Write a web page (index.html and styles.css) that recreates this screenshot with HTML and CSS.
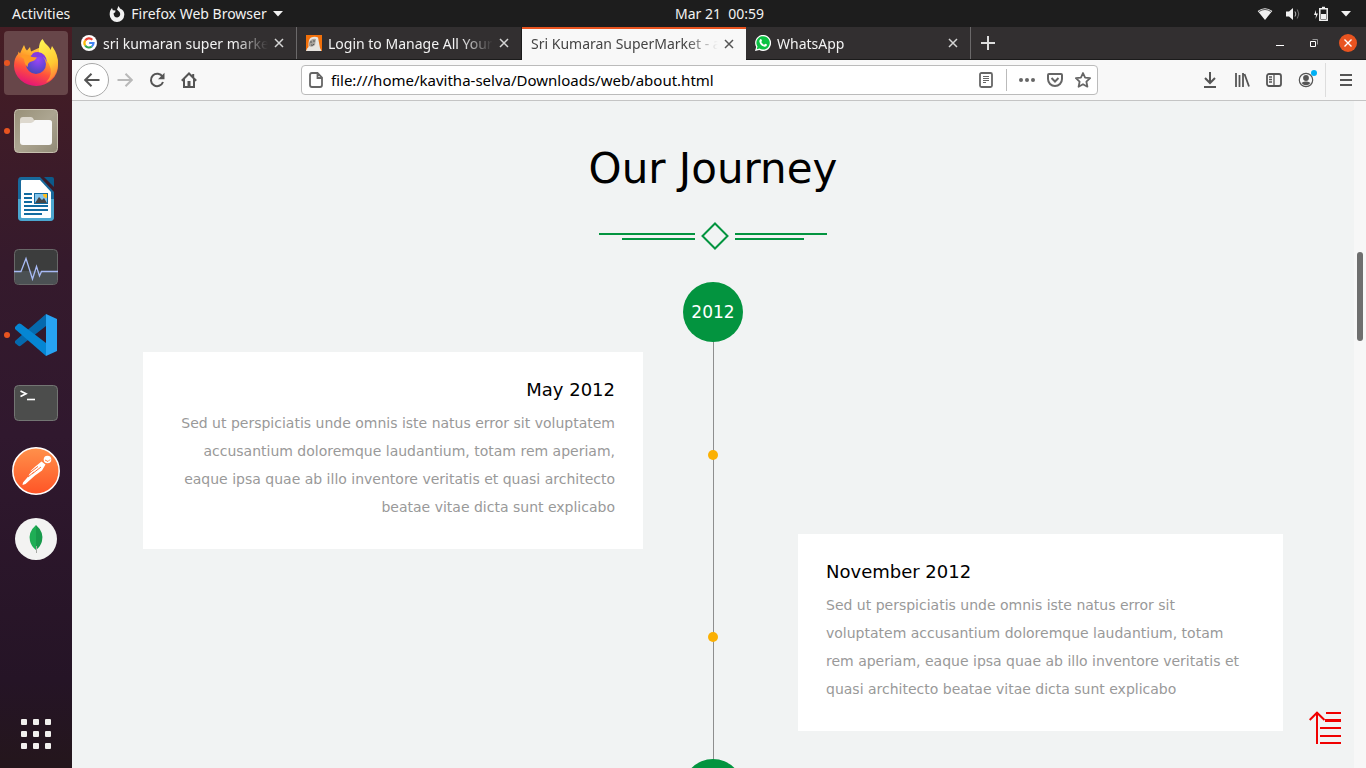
FILE: index.html
```html
<!DOCTYPE html>
<html lang="en">
<head>
<meta charset="utf-8">
<title>Sri Kumaran SuperMarket - about</title>
<meta name="viewport" content="width=device-width, initial-scale=1">
<link rel="stylesheet" href="styles.css">
</head>
<body>
<div class="desktop">
  <header class="panel">
    <div class="panel-left">
      <button class="panel-btn" type="button">Activities</button>
      <button class="panel-btn app-menu" type="button">
        <svg width="16" height="16" viewBox="0 0 16 16" aria-hidden="true"><path d="M8 3.5 9.5 0 11 2.500C14 3.500 15.500 6 15.300 8.800A7.300 7.300 0 0 1 .7 8.500C.6 6 1.300 4 3 2L3.800 4.200 6.500 4.500 6.200 6.200 4.600 7.200C4.600 10 6 11.400 8.200 11.400A3.400 3.400 0 0 0 11.200 8C11.200 6 9.800 5.500 8 3.500Z" fill="#f2f2f2"/></svg>
        <span>Firefox Web Browser</span>
        <svg width="10" height="6" viewBox="0 0 10 6" aria-hidden="true"><path d="M0 0h10L5 5.500z" fill="#f2f2f2"/></svg>
      </button>
    </div>
    <time class="clock">Mar 21&nbsp; 00:59</time>
    <button class="panel-btn status" type="button" aria-label="System status">
      <svg width="16" height="14" viewBox="0 0 16 14" aria-hidden="true"><path d="M.7 4Q8-1.500 15.300 4L8 13z" fill="#f2f2f2"/><path d="M2 4.500Q8 .5 14 4.500" fill="none" stroke="#555"/></svg>
      <svg width="16" height="14" viewBox="0 0 16 14" aria-hidden="true"><path d="M1 4.500h3L8 1v12L4 9.500H1z" fill="#f2f2f2"/><path d="M10 4.500q1.700 2.500 0 5" fill="none" stroke="#bbb"/><path d="M12.300 2.500q3 4.500 0 9" fill="none" stroke="#777"/></svg>
      <svg width="16" height="16" viewBox="0 0 16 16" aria-hidden="true"><path d="M3 4 1 9h2l-.5 4L5 7.500H3z" fill="#f2f2f2"/><path d="M6.800 2.800h7.400v11.400H6.800zM9 1.500h3" fill="none" stroke="#f2f2f2" stroke-width="1.500"/><path d="M8 8h5v5H8z" fill="#f2f2f2"/></svg>
      <svg width="10" height="6" viewBox="0 0 10 6" aria-hidden="true"><path d="M0 0h10L5 5.500z" fill="#f2f2f2"/></svg>
    </button>
  </header>

  <div class="workspace">
    <nav class="dock" aria-label="Dock">
      <button class="dock-app running focused" type="button" aria-label="Firefox">
        <svg width="48" height="48" viewBox="0 0 48 48">
          <defs>
            <linearGradient id="ff-body" x1=".75" y1="0" x2=".35" y2="1"><stop offset="0" stop-color="#ffe14a"/><stop offset=".35" stop-color="#ffa52c"/><stop offset=".65" stop-color="#ff4f3d"/><stop offset="1" stop-color="#e3127a"/></linearGradient>
            <linearGradient id="ff-tail" x1=".4" y1="0" x2=".7" y2="1"><stop offset="0" stop-color="#fff250"/><stop offset=".6" stop-color="#ffc832"/><stop offset="1" stop-color="#ff7139"/></linearGradient>
            <radialGradient id="ff-globe" cx=".6" cy=".3" r=".8"><stop offset="0" stop-color="#9a45f5"/><stop offset=".5" stop-color="#6b45d8"/><stop offset="1" stop-color="#3d4aae"/></radialGradient>
          </defs>
          <path d="M10 10 12 6Q13.500 10.500 15 11.500L18 8 19 12.500 29 8C40 10 46 19 46 26A22 20.500 0 0 1 2 27Q2 19 6 15L6.500 12.500 8 14.500Z" fill="url(#ff-body)"/>
          <path d="M27 10Q27 3 30.500 0 33 5 36 7 38 9 38.500 11L40 7Q46.500 16 46 25 45 39 34 43.500 42 35 37 25 34 20 27 17Z" fill="url(#ff-tail)"/>
          <circle cx="24" cy="25" r="10" fill="url(#ff-globe)"/>
          <path d="M8 17Q15 14 20 18L25 18.500Q23 22 18 23 15 25 16 28 12 25 12 20Z" fill="#ff9b25"/>
          <path d="M20 18Q19 13 26 13 34 14 35 23 31 16 25 18Z" fill="#843be0"/>
        </svg>
      </button>
      <button class="dock-app running" type="button" aria-label="Files">
        <svg width="48" height="48" viewBox="0 0 48 48">
          <defs><linearGradient id="files-bg" x1="0" y1="0" x2="1" y2="1"><stop offset="0" stop-color="#989078"/><stop offset=".5" stop-color="#aca591"/><stop offset="1" stop-color="#918a76"/></linearGradient></defs>
          <rect x="2.500" y="2.500" width="43" height="43" rx="4" fill="url(#files-bg)" stroke="#c6bfae"/>
          <path d="M8 13q0-3 3-3h8q2 0 3 3h15q3 0 3 3v6H8z" fill="#ddd8ce"/>
          <path d="M8 17q0-1 2-1h9q2 0 4-3h14q3 0 3 3v19q0 3-3 3H11q-3 0-3-3z" fill="#f8f8f8"/>
        </svg>
      </button>
      <button class="dock-app" type="button" aria-label="Writer">
        <svg width="48" height="48" viewBox="0 0 48 48">
          <path d="M9 2h19l14 15v25q0 4-4 4H10q-4 0-4-4V6q0-4 3-4z" fill="#18699b"/>
          <path d="M6 24h36v18q0 4-4 4H10q-4 0-4-4z" fill="#4ba6cf"/>
          <path d="M9 6q0-1 1-1h18l11 12v25q0 1-1 1H10q-1 0-1-1z" fill="#fff"/>
          <path d="M32 2h8q2 0 2 2v8z" fill="#0c5a8a"/>
          <path d="M12 19h8M12 23h8M12 27h8M12 31h24M12 35h24M12 39h18" stroke="#126ba0" stroke-width="2"/>
          <rect x="22.500" y="18.500" width="13" height="10" fill="#82c4ec" stroke="#126ba0"/><path d="M23 28l4-6 3 3 2-2 3 5z" fill="#454545"/><path d="M31 19h4v4q-4 0-4-4z" fill="#ffbf1f"/>
        </svg>
      </button>
      <button class="dock-app" type="button" aria-label="System Monitor">
        <svg width="48" height="48" viewBox="0 0 48 48">
          <rect x="2.500" y="6.500" width="43" height="35" rx="4" fill="#3c3d3d" stroke="#686868"/><path d="M3 28h42v9q0 4-4 4H7q-4 0-4-4z" fill="#4b5053"/>
          <path d="M2 28.500h7l5-13 6.500 20.500 4-12.500 3 9.500 2-4.500H46" fill="none" stroke="#a8baf5" stroke-width="1.300"/>
        </svg>
      </button>
      <button class="dock-app running" type="button" aria-label="Visual Studio Code">
        <svg width="48" height="48" viewBox="0 0 48 48">
          <path d="M34 3v12L9 34.500Q7.500 36 6 34.500L3 32v-2z" fill="#0569ad"/>
          <path d="M3 16l3-3q1.500-1 3 0l25 19v13L3 18z" fill="#0586d3"/>
          <path d="M34 3l11 5v32l-11 5z" fill="#27a3f2"/>
        </svg>
      </button>
      <button class="dock-app" type="button" aria-label="Terminal">
        <svg width="48" height="48" viewBox="0 0 48 48">
          <rect x="2.500" y="6.500" width="43" height="35" rx="4" fill="#4c4d4c" stroke="#737573"/>
          <path d="M8.500 12l5.500 2.800-5.500 2.800" fill="none" stroke="#fff" stroke-width="1.700"/><path d="M15 20.500h8" stroke="#fff" stroke-width="1.600"/>
        </svg>
      </button>
      <button class="dock-app" type="button" aria-label="Postman">
        <svg width="48" height="48" viewBox="0 0 48 48">
          <defs><linearGradient id="pm" x1="0" y1="0" x2="0" y2="1"><stop offset="0" stop-color="#ff914b"/><stop offset="1" stop-color="#ff5426"/></linearGradient></defs>
          <circle cx="24" cy="24" r="23.200" fill="url(#pm)" stroke="#fff" stroke-width="1.500"/>
          <circle cx="35.500" cy="12.500" r="3.800" fill="#fff"/><path d="M33 13l3 1.500 2-2" fill="none" stroke="#ff7c3d"/>
          <path d="M29.500 14.500l4 3-3.500 6-7 5-4.500 4-5 4.500-3 1 .5-2.500 6.500-7.500-1 .5 3-4.500-1.500.5q5-5 11.500-10z" fill="#fff"/>
          <path d="M18 25.500l8-6M20 27l9-7M16 30l6-5" stroke="#ff7138"/>
        </svg>
      </button>
      <button class="dock-app" type="button" aria-label="MongoDB Compass">
        <svg width="48" height="48" viewBox="0 0 48 48">
          <circle cx="24" cy="24" r="21" fill="#f3f3f2"/><path d="M24 10Q16 17 18 26q1 5 6 9z" fill="#1fae55"/><path d="M24 10q8 7 6 16-1 5-6 9z" fill="#189a4b"/><path d="M24.500 31v7" stroke="#a7aaa5"/>
        </svg>
      </button>
      <button class="dock-app show-apps" type="button" aria-label="Show Applications">
        <svg width="30" height="30" viewBox="0 0 30 30" fill="#f2f0ee">
          <rect width="6" height="6" rx="1"/><rect x="12" width="6" height="6" rx="1"/><rect x="24" width="6" height="6" rx="1"/>
          <rect y="12" width="6" height="6" rx="1"/><rect x="12" y="12" width="6" height="6" rx="1"/><rect x="24" y="12" width="6" height="6" rx="1"/>
          <rect y="24" width="6" height="6" rx="1"/><rect x="12" y="24" width="6" height="6" rx="1"/><rect x="24" y="24" width="6" height="6" rx="1"/>
        </svg>
      </button>
    </nav>

    <div class="browser">
      <div class="tabbar">
        <div class="tab">
          <svg width="16" height="16" viewBox="0 0 16 16" aria-hidden="true"><circle cx="8" cy="8" r="8" fill="#fff"/><g fill="none" stroke-width="2.200"><path d="M4.200 5.500A4.500 4.500 0 0 1 11.300 4.800" stroke="#ea4335"/><path d="M4.200 5.500a4.500 4.500 0 0 0 0 5" stroke="#fbbc05"/><path d="M4.200 10.500a4.500 4.500 0 0 0 6.600 1" stroke="#34a853"/><path d="M8.200 8h4.300q0 2.200-1.700 3.500" stroke="#4285f4"/></g></svg>
          <button class="tab-title" type="button">sri kumaran super market</button>
          <button class="tab-close" type="button" aria-label="Close tab"><svg width="10" height="10" viewBox="0 0 10 10"><path d="M1 1l8 8M9 1L1 9" stroke="currentColor" stroke-width="1.500"/></svg></button>
        </div>
        <div class="tab">
          <svg width="16" height="16" viewBox="0 0 16 16" aria-hidden="true"><path d="M0 0h16v16H0z" fill="#f2700a"/><path d="M0 16q1-3 2.500-4Q2 4 5 2.500 9 1 12 2.500l2 10.500 1.500 3z" fill="#e8e4df"/><path d="M3 8q2-5 7-4l-1 6q-3 3-6 1z" fill="#a7a19a"/><path d="M4 7h2M7 6h2M5 10q2 1 3-1" fill="none" stroke="#555"/></svg>
          <button class="tab-title" type="button">Login to Manage All Your A</button>
          <button class="tab-close" type="button" aria-label="Close tab"><svg width="10" height="10" viewBox="0 0 10 10"><path d="M1 1l8 8M9 1L1 9" stroke="currentColor" stroke-width="1.500"/></svg></button>
        </div>
        <div class="tab active">
          <button class="tab-title" type="button">Sri Kumaran SuperMarket - about</button>
          <button class="tab-close" type="button" aria-label="Close tab"><svg width="10" height="10" viewBox="0 0 10 10"><path d="M1 1l8 8M9 1L1 9" stroke="currentColor" stroke-width="1.500"/></svg></button>
        </div>
        <div class="tab">
          <svg width="16" height="16" viewBox="0 0 16 16" aria-hidden="true"><path d="M0 16l1.200-4A8 8 0 1 1 4.300 15z" fill="#fff"/><path d="M1.700 14.300l.8-2.700A6.700 6.700 0 1 1 4.600 13.600z" fill="#0cc143"/><path d="M5.200 4.200q1-.8 1.500.8l.3 1-.8 1q1 2 3 2.700l1-1q2 .7 1.800 1.200-.3 2-2.500 1.800Q5.500 11 4.300 6.500q0-1.300.9-2.300z" fill="#fff"/></svg>
          <button class="tab-title" type="button">WhatsApp</button>
          <button class="tab-close" type="button" aria-label="Close tab"><svg width="10" height="10" viewBox="0 0 10 10"><path d="M1 1l8 8M9 1L1 9" stroke="currentColor" stroke-width="1.500"/></svg></button>
        </div>
        <button class="new-tab" type="button" aria-label="New tab"><svg width="14" height="14" viewBox="0 0 14 14"><path d="M7 0v14M0 7h14" stroke="#ddd" stroke-width="2"/></svg></button>
        <div class="window-buttons">
          <button type="button" aria-label="Minimize"><svg width="8" height="8" viewBox="0 0 8 8"><path d="M0 6.500h8" stroke="#fff"/></svg></button>
          <button type="button" aria-label="Restore"><svg width="8" height="8" viewBox="0 0 8 8" fill="none"><path d="M2.500.5h5v5" stroke="#999"/><path d="M.5 2.500h5v5h-5z" stroke="#fff"/></svg></button>
          <button class="close-window" type="button" aria-label="Close"><svg width="8" height="8" viewBox="0 0 8 8"><path d="M.5.5l7 7m0-7l-7 7" stroke="#fff" stroke-width="1.400"/></svg></button>
        </div>
      </div>

      <div class="toolbar">
        <div class="nav-buttons">
          <button class="back" type="button" aria-label="Back"><svg width="16" height="16" viewBox="0 0 16 16"><path d="M15.500 8H1.500M7.500 1.700L1.200 8l6.300 6.300" fill="none" stroke="currentColor" stroke-width="2"/></svg></button>
          <button class="tool" type="button" aria-label="Forward" disabled><svg width="16" height="16" viewBox="0 0 16 16"><path d="M.5 8h14M8.500 1.700L14.800 8l-6.300 6.300" fill="none" stroke="currentColor" stroke-width="2"/></svg></button>
          <button class="tool" type="button" aria-label="Reload"><svg width="16" height="16" viewBox="0 0 16 16"><path d="M13.500 4.800A6.200 6.200 0 1 0 14 10" fill="none" stroke="currentColor" stroke-width="2"/><path d="M15.500.8v6.400H9z" fill="currentColor"/></svg></button>
          <button class="tool" type="button" aria-label="Home"><svg width="16" height="16" viewBox="0 0 16 16"><path d="M.8 8.700L8 1.500l7.200 7.200M3 7v8h10V7M12.200 2v3" fill="none" stroke="currentColor" stroke-width="2"/><path d="M6.500 9h3v6h-3z" fill="currentColor"/></svg></button>
        </div>
        <div class="urlbar">
          <svg width="16" height="16" viewBox="0 0 16 16" aria-hidden="true"><path d="M4 1h5.500L14 5.500V13q0 2-2 2H4q-2 0-2-2V3q0-2 2-2zM9.500 1v5H14" fill="none" stroke="currentColor" stroke-width="1.800"/></svg>
          <input type="text" aria-label="Address" value="file:///home/kavitha-selva/Downloads/web/about.html">
          <button type="button" aria-label="Reader view"><svg width="16" height="16" viewBox="0 0 16 16"><rect x="2" y="1" width="12" height="14" rx="1.500" fill="none" stroke="currentColor" stroke-width="1.800"/><path d="M5 4.500h6M5 6.500h6M5 8.500h6M5 10.500h3" stroke="currentColor"/></svg></button>
          <span class="divider"></span>
          <button type="button" aria-label="Page actions"><svg width="16" height="16" viewBox="0 0 16 16" fill="currentColor"><circle cx="2" cy="8" r="2"/><circle cx="8" cy="8" r="2"/><circle cx="14" cy="8" r="2"/></svg></button>
          <button type="button" aria-label="Pocket"><svg width="16" height="16" viewBox="0 0 16 16" fill="none" stroke="currentColor" stroke-width="2"><path d="M2 2h12q1 0 1 1v4a7 7 0 0 1-14 0V3q0-1 1-1z"/><path d="M4.500 6L8 9.500 11.500 6"/></svg></button>
          <button type="button" aria-label="Bookmark"><svg width="16" height="16" viewBox="0 0 16 16"><path d="M8 1l2.100 4.600 5 .6-3.700 3.500 1 5L8 12.200l-4.400 2.500 1-5L.9 6.200l5-.6z" fill="none" stroke="currentColor" stroke-width="1.800" stroke-linejoin="round"/></svg></button>
        </div>
        <div class="actions">
          <button class="tool" type="button" aria-label="Downloads"><svg width="16" height="16" viewBox="0 0 16 16"><path d="M8 0v11M3 6l5 5 5-5M2 15h12" fill="none" stroke="currentColor" stroke-width="2"/></svg></button>
          <button class="tool" type="button" aria-label="Library"><svg width="16" height="16" viewBox="0 0 16 16"><path d="M2 1v14M5.500 3v12M9 1v14M10.500 2l4.500 12.500" fill="none" stroke="currentColor" stroke-width="1.800"/></svg></button>
          <button class="tool" type="button" aria-label="Sidebars"><svg width="16" height="16" viewBox="0 0 16 16"><rect x="1" y="2" width="14" height="12" rx="2" fill="none" stroke="currentColor" stroke-width="1.800"/><path d="M8 2v12M3 5h3M3 7.500h3M3 10h3" stroke="currentColor" stroke-width="1.300"/></svg></button>
          <button class="tool account" type="button" aria-label="Account"><svg width="16" height="16" viewBox="0 0 16 16"><circle cx="8" cy="8" r="6.700" fill="none" stroke="currentColor" stroke-width="1.200"/><circle cx="8" cy="6" r="2.900" fill="currentColor"/><path d="M3.500 11q2-2 4.500-1.500 2.500-.5 4.500 1.500-2 2.300-4.500 2.300T3.500 11z" fill="currentColor"/></svg></button>
          <button class="menu" type="button" aria-label="Menu"><svg width="12" height="12" viewBox="0 0 12 12"><path d="M0 1h12M0 6h12M0 11h12" stroke="currentColor" stroke-width="2"/></svg></button>
        </div>
      </div>

      <div class="viewport">
        <main class="page">
          <h2 class="heading">Our Journey</h2>
          <svg class="ornament" width="228" height="28" viewBox="0 0 228 28" fill="none" stroke="#03943f" stroke-width="2" aria-hidden="true"><path d="M0 12h96M23 17h73M136 12h92M136 17h69"/><path d="M116 1.500L128.500 14 116 26.500 103.500 14z"/></svg>
          <section class="timeline">
            <div class="year">2012</div>
            <article class="entry left">
              <div class="card">
                <h3>May 2012</h3>
                <p>Sed ut perspiciatis unde omnis iste natus error sit voluptatem accusantium doloremque laudantium, totam rem aperiam, eaque ipsa quae ab illo inventore veritatis et quasi architecto beatae vitae dicta sunt explicabo</p>
              </div>
              <span class="dot"></span>
            </article>
            <article class="entry right">
              <span class="dot"></span>
              <div class="card">
                <h3>November 2012</h3>
                <p>Sed ut perspiciatis unde omnis iste natus error sit voluptatem accusantium doloremque laudantium, totam rem aperiam, eaque ipsa quae ab illo inventore veritatis et quasi architecto beatae vitae dicta sunt explicabo</p>
              </div>
            </article>
            <div class="year"></div>
          </section>
        </main>
        <div class="scrollbar"><span class="thumb"></span></div>
        <a class="to-top" href="#" aria-label="Back to top"><svg width="32" height="34" viewBox="0 0 32 34" fill="none" stroke="#f00000" stroke-width="2"><path d="M8 33V2M.7 9L8 1.700 15.500 9M17 2h15"/><path d="M16 9.500h16" stroke-width="3"/><path d="M11 17h21M11 25h21M11 32h21"/></svg></a>
      </div>
    </div>
  </div>
</div>
</body>
</html>
```
FILE: styles.css
```css
* { box-sizing: border-box; }

body {
  margin: 0;
  font-family: "Noto Sans", "Open Sans", sans-serif;
  font-size: 14px;
}

button {
  display: flex;
  align-items: center;
  justify-content: center;
  padding: 0;
  border: 0;
  background: none;
  color: inherit;
  font: inherit;
}

svg { display: block; flex: none; }

.desktop {
  display: flex;
  flex-direction: column;
  height: 100vh;
  overflow: hidden;
}

/* Top panel */
.panel {
  display: grid;
  grid-template-columns: 1fr auto 1fr;
  align-items: center;
  flex: none;
  height: 27px;
  padding: 0 15px 0 12px;
  background: #1d1d1d;
  color: #f2f2f2;
}
.panel-left { display: flex; gap: 39px; }
.app-menu { gap: 6px; }
.clock { padding-left: 76px; white-space: pre; }
.status { gap: 12px; justify-self: end; }

.workspace { display: flex; flex: 1; min-height: 0; }

/* Dock */
.dock {
  display: flex;
  flex-direction: column;
  flex: none;
  gap: 4px;
  width: 72px;
  padding: 4px 4px 2px;
  background: linear-gradient(#461d24, #351a2c 32%, #30182e 55%, #251426 88%, #24161c);
}
.dock-app {
  position: relative;
  flex: none;
  width: 64px;
  height: 64px;
  border-radius: 4px;
}
.focused { background: #674649; }
.running::before {
  content: "";
  position: absolute;
  left: 0;
  top: 29px;
  width: 6px;
  height: 6px;
  border-radius: 50%;
  background: #e95420;
}
.show-apps { margin-top: auto; }

/* Browser chrome */
.browser { display: flex; flex-direction: column; flex: 1; min-width: 0; }

.tabbar {
  display: flex;
  flex: none;
  height: 33px;
  background: #322f30;
  color: #f2f2f2;
  border-bottom: 1px solid #1b1b1b;
}
.tab {
  display: flex;
  align-items: center;
  flex: 0 1 225px;
  gap: 6px;
  min-width: 0;
  padding: 0 12px 0 9px;
  border-right: 1px solid #6b696a;
}
.tab:has(+ .active) { border-right-color: #1b1b1b; }
.tab.active {
  flex-basis: 224px;
  margin-bottom: -1px;
  border-top: 2px solid #e95420;
  border-right: 0;
  padding-bottom: 2px;
  background: #f8f8f8;
  color: #444;
}
.tab-title {
  flex: 1;
  justify-content: flex-start;
  min-width: 0;
  overflow: hidden;
  white-space: nowrap;
  mask-image: linear-gradient(to left, transparent, #000 32px);
}
.tab-close { color: #d5d5d5; width: 10px; height: 20px; }
.active .tab-close { color: #555; }
.new-tab { width: 34px; }
.window-buttons { display: flex; align-items: center; gap: 16px; margin-left: auto; padding-right: 9px; }
.window-buttons button { width: 18px; height: 18px; border-radius: 50%; }
.window-buttons .close-window { background: #e95420; }

.toolbar {
  display: flex;
  align-items: center;
  flex: none;
  height: 41px;
  padding-left: 3px;
  background: #f8f8f8;
  border-bottom: 1px solid #c4c4c4;
  color: #555;
}
.nav-buttons, .actions { display: flex; align-items: center; flex: none; }
.back {
  width: 34px;
  height: 34px;
  border: 1px solid #a9a9a9;
  border-radius: 50%;
  background: #fff;
}
.tool { width: 32px; height: 32px; }
.tool:disabled { color: #b9b9b9; }
.urlbar {
  display: flex;
  align-items: center;
  flex: 1;
  gap: 12px;
  min-width: 0;
  height: 30px;
  margin: 0 96px;
  padding: 0 6px;
  border: 1px solid #bbb;
  border-radius: 4px;
  background: #fff;
  color: #666;
}
.urlbar input {
  flex: 1;
  min-width: 0;
  margin-left: -5px;
  padding: 0;
  border: 0;
  outline: 0;
  background: none;
  color: #000;
  font: inherit;
  font-size: 15px;
}
.divider { width: 1px; height: 22px; background: #bbb; }
.account { position: relative; }
.account::after {
  content: "";
  position: absolute;
  top: 6px;
  right: 5px;
  width: 6px;
  height: 6px;
  border-radius: 50%;
  background: #00b0f4;
}
.menu {
  width: 41px;
  height: 34px;
  margin-left: 3px;
  border-left: 1px solid #ddd;
}

/* Page */
.viewport {
  position: relative;
  display: flex;
  flex: 1;
  min-height: 0;
  overflow: hidden;
  background: #f1f3f3;
}
.page {
  flex: 1;
  min-width: 0;
  padding: 43px 20px 0;
  font-family: "DejaVu Sans", sans-serif;
}
.heading {
  margin: 0 0 28px;
  color: #000;
  font-size: 42px;
  font-weight: 400;
  line-height: 50px;
  text-align: center;
}
.ornament { margin: 0 auto 32px; }
.timeline {
  max-width: 1140px;
  margin: 0 auto;
  background: linear-gradient(#8e8e8e, #8e8e8e) center / 1px 100% no-repeat;
}
.year {
  width: 60px;
  height: 60px;
  margin: 0 auto;
  border-radius: 50%;
  background: #03943f;
  color: #fff;
  font-size: 17px;
  line-height: 60px;
  text-align: center;
}
.entry {
  display: grid;
  grid-template-columns: 1fr 10px 1fr;
  align-items: center;
}
.left { margin-top: 10px; text-align: right; }
.right { margin: -15px 0 28px; }
.dot {
  grid-column: 2;
  width: 10px;
  height: 10px;
  margin-top: 9px;
  border-radius: 50%;
  background: #fbb003;
}
.card { padding: 28px; background: #fff; }
.left .card { margin-right: 65px; }
.right .card { margin-left: 80px; }
.card h3 {
  margin: 0 0 9px;
  color: #000;
  font-size: 18px;
  font-weight: 400;
  line-height: 20px;
}
.card p {
  margin: 0;
  color: #999;
  font-size: 14px;
  line-height: 28px;
}

.scrollbar { flex: none; width: 12px; padding: 151px 3px 0; background: #f7f7f7; }
.thumb { display: block; height: 89px; border-radius: 3px; background: #6e6e6e; }
.to-top { position: absolute; right: 25px; bottom: 23px; }
```
